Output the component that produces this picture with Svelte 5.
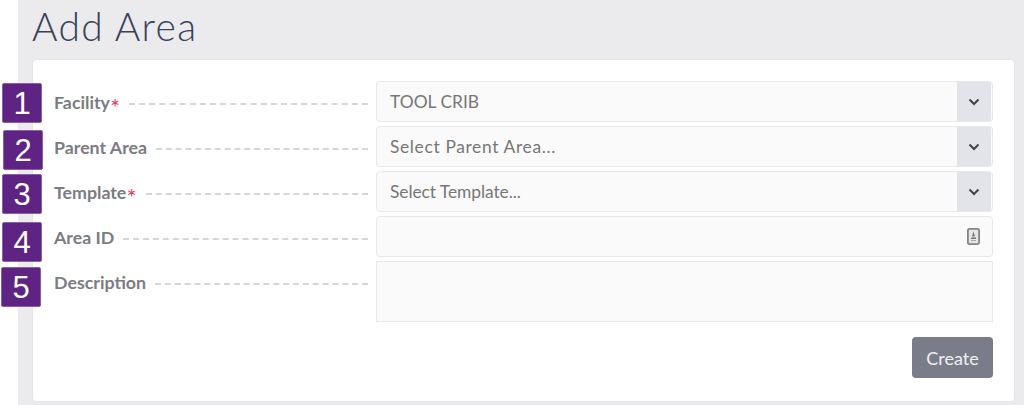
<script>
  const rows = [
    { label: 'Facility', req: true, type: 'select', value: 'TOOL CRIB' },
    { label: 'Parent Area', type: 'select', placeholder: 'Select Parent Area...', tune: 'wide' },
    { label: 'Template', req: true, type: 'select', placeholder: 'Select Template...', tune: 'tight' },
    { label: 'Area ID', type: 'id' },
    { label: 'Description', type: 'area' }
  ];
  const badges = [
    { n: 1, cls: 'b1' }, { n: 2, cls: 'b2' }, { n: 3, cls: 'b3' }, { n: 4, cls: 'b4' }, { n: 5, cls: 'b5' }
  ];
</script>

<div class="page">
  <h1>Add Area</h1>
  <div class="card">
    {#each rows as r}
      <div class="row">
        <div class="label">
          <span class="text">{r.label}</span>{#if r.req}<span class="req">*</span>{/if}
          <span class="dash"></span>
        </div>
        {#if r.type === 'select'}
          <div class="field select">
            <span class="val {r.tune ?? ''}">{r.value ?? r.placeholder}</span>
            <span class="caret">
              <svg width="12" height="8" viewBox="0 0 12 8"><path d="M1.5 1.5 6 6l4.5-4.5" fill="none" stroke="#444" stroke-width="2"/></svg>
            </span>
          </div>
        {:else if r.type === 'id'}
          <div class="field idf">
            <svg width="13" height="17" viewBox="0 0 13 17"><rect x="0.9" y="0.9" width="11.2" height="15.2" rx="1.5" fill="#e6e6e6" stroke="#858585" stroke-width="1.8"/><path d="M6.5 3.5 8 8.5H5Z" fill="#777"/><rect x="4" y="9.5" width="5" height="1.5" fill="#777"/><rect x="4" y="12" width="5" height="1" fill="#aaa"/></svg>
          </div>
        {:else}
          <div class="field area"></div>
        {/if}
      </div>
    {/each}
    <div class="actions"><button>Create</button></div>
  </div>
  {#each badges as b}
    <div class="badge {b.cls}">{b.n}</div>
  {/each}
</div>

<style>
  :global(body) { margin: 0; background: #fff; }
  .page {
    position: relative;
    margin-left: 18px;
    height: 405px;
    box-sizing: border-box;
    padding: 0 9px 0 14px;
    background: #ebebee;
    font-family: Lato, sans-serif;
  }
  h1 {
    margin: 0;
    height: 59px;
    box-sizing: border-box;
    padding-top: 3px;
    font-size: 39px;
    line-height: 46px;
    font-weight: 300;
    color: #3a4258;
    letter-spacing: 1.35px;
  }
  .card {
    height: 343px;
    box-sizing: border-box;
    padding: 21px 21px 0;
    background: #fff;
    border: 1px solid #e4e4e6;
    border-radius: 4px;
    display: flex;
    flex-direction: column;
    gap: 4.1px;
  }
  .row { display: grid; grid-template-columns: 314px 617px; column-gap: 8px; }
  .label {
    display: flex;
    align-items: flex-start;
    font-size: 17.8px;
    font-weight: 700;
    color: #7b7c83;
    line-height: 20px;
    padding-top: 11px;
    box-sizing: border-box;
  }
  .req { color: #e8405e; font-size: 24px; font-weight: 400; line-height: 20px; margin-top: 5px; }
  .dash {
    flex: 1;
    margin-left: 9px;
    margin-top: 11px;
    height: 0;
    border-top: 2px dashed #d6d6d6;
  }
  .field {
    height: 41px;
    box-sizing: border-box;
    background: #fafafa;
    border: 1.5px solid #e8e8e8;
    border-radius: 4px;
    font-size: 17.4px;
    color: #767676;
    display: flex;
    align-items: center;
  }
  .select { padding-left: 13px; overflow: hidden; }
  .val { flex: 1; }
  .wide { letter-spacing: 0.65px; }
  .tight { letter-spacing: -0.07px; }
  .caret {
    width: 34px;
    align-self: stretch;
    background: #e2e4e9;
    display: flex;
    align-items: center;
    justify-content: center;
    margin-right: 1px;
  }
  .idf { justify-content: flex-end; padding-right: 12px; }
  .area { height: 61px; border-radius: 0; border-width: 1px; }
  .actions { display: flex; justify-content: flex-end; width: 939px; padding-top: 11px; }
  button {
    width: 81px;
    height: 41px;
    border: 0;
    border-radius: 4px;
    background: #7a7c8a;
    color: #eff0f2;
    font: 18px Lato, sans-serif;
  }
  .badge {
    position: absolute;
    width: 40px;
    height: 40px;
    background: #5f2383;
    border: 0.5px solid #8a5fa5;
    border-radius: 2px;
    color: #fff;
    font: 31px/40px "Liberation Sans", sans-serif;
    text-align: center;
    box-sizing: border-box;
  }
  .b1 { left: -16px; top: 83px; }
  .b2 { left: -15px; top: 130px; }
  .b3 { left: -16px; top: 174px; }
  .b4 { left: -16px; top: 222px; }
  .b5 { left: -17px; top: 267px; }
</style>
